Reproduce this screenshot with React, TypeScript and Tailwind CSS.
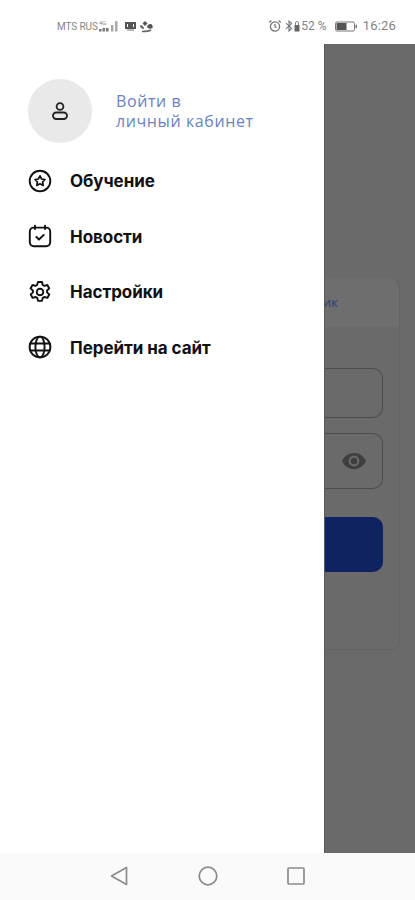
import React from "react";

const Sharp = "[font-family:Inter,'Liberation_Sans',sans-serif]";

function Signal() {
  return (
    <svg width="21" height="14" viewBox="0 0 21 14" className="ml-[1px]">
      <text x="0" y="6" fontSize="6" fill="#8a8a8a" fontFamily="Roboto, sans-serif">4G</text>
      <rect x="0" y="10" width="2.500" height="2.500" fill="#777" />
      <rect x="3.500" y="9" width="2.500" height="3.500" fill="#777" />
      <rect x="7" y="9" width="2.500" height="3.500" fill="#777" />
      <rect x="12" y="6" width="2.500" height="6.500" fill="#aaa" />
      <rect x="16" y="2" width="2.500" height="10.500" fill="#aaa" />
    </svg>
  );
}

function StatusBar() {
  return (
    <div className="h-[44px] shrink-0 bg-white flex items-center justify-between pl-[57px] pr-[19px] pt-[8px] font-['Roboto',sans-serif] text-[#858585]">
      <div className="flex items-center">
        <span className="text-[10px] tracking-[-0.1px]">MTS RUS</span>
        <Signal />
        <svg width="11" height="10" viewBox="0 0 11 10" className="ml-[5px]">
          <path d="M0 1h11v7H0z M2 3v3h7V3z" fill="#555" fillRule="evenodd" />
          <rect x="3" y="3" width="5" height="3" fill="#555" />
          <rect x="2" y="8.500" width="7" height="1" fill="#777" />
        </svg>
        <svg width="15" height="13" viewBox="0 0 15 13" className="ml-[3px]">
          <path d="M6 1 8.500 3.500 6 6 3.500 3.500Z" fill="#555" />
          <path d="M1 5c2 0 4 1.500 4 4-2.500 0-4-1.500-4-4Z" fill="#666" />
          <path d="M8 7c0-2 2-3.500 4-3 1.500 1 2 2 1.500 4-1.500 1-4 1-5.500-1Z" fill="#555" />
          <path d="M3 11.500c3 0 6.500 0 9-1.500" stroke="#666" strokeWidth="1.500" fill="none" />
        </svg>
      </div>
      <div className="flex items-center">
        <svg width="14" height="14" viewBox="0 0 14 14" fill="none" stroke="#777" strokeWidth="1.300">
          <circle cx="7" cy="7.500" r="4.600" />
          <path d="M7 5v2.700l1.600 1M1.200 3.400 3.400 1.400M12.800 3.400l-2.200-2" />
        </svg>
        <svg width="8" height="12" viewBox="0 0 8 12" fill="none" stroke="#777" strokeWidth="1.100" className="ml-[3px]">
          <path d="M1 3.200 6.600 8.400 4 11V1l2.600 2.600L1 8.800" />
        </svg>
        <svg width="6" height="12" viewBox="0 0 6 12" className="ml-[1px]">
          <path d="M1.500 5V3a1.500 1.500 0 0 1 3 0v2" fill="none" stroke="#888" />
          <rect x="0.500" y="5" width="5" height="6.500" fill="#666" />
        </svg>
        <span className="ml-[1px] text-[12px]">52 %</span>
        <svg width="23" height="11" viewBox="0 0 23 11" className="ml-[8px]">
          <rect x="0.500" y="1" width="19" height="9" rx="1.500" fill="#fff" stroke="#777" />
          <rect x="1.500" y="2" width="10" height="7" fill="#555" />
          <rect x="20.500" y="3.800" width="1.500" height="3.400" fill="#777" />
        </svg>
        <span className="ml-[5px] text-[13px] tracking-[0.2px]">16:26</span>
      </div>
    </div>
  );
}

function Icon({ children }: { children: React.ReactNode }) {
  return (
    <svg width="24" height="24" viewBox="0 0 24 24" fill="none" stroke="#111" strokeWidth="1.900" strokeLinecap="round" strokeLinejoin="round" className="shrink-0">
      {children}
    </svg>
  );
}

const items = [
  {
    label: "Обучение",
    icon: (
      <>
        <circle cx="12" cy="12" r="10.300" />
        <path d="M12 6.800 13.600 10 17 10.500 14.600 13 15.200 16.400 12 14.800 8.800 16.400 9.400 13 7 10.500 10.400 10Z" strokeWidth="1.700" />
      </>
    ),
  },
  {
    label: "Новости",
    icon: (
      <>
        <rect x="1.800" y="3.600" width="20.400" height="18.600" rx="4" />
        <path d="M7 1.600v3.400M17 1.600v3.400" />
        <path d="m8.400 13 2.600 2.500 4.800-4.600" />
      </>
    ),
  },
  {
    label: "Настройки",
    icon: (
      <>
        <circle cx="12" cy="12" r="3.300" />
        <path d="M10 2h4l.7 3 1.600.9 3-.9 2 3.400-2.200 2.100v1.900l2.200 2.100-2 3.400-3-.9-1.600.9-.7 3h-4l-.7-3-1.600-.9-3 .9-2-3.400 2.200-2.100v-1.900L2.500 8.400l2-3.400 3 .9 1.600-.9Z" />
      </>
    ),
  },
  {
    label: "Перейти на сайт",
    icon: (
      <>
        <circle cx="12" cy="12" r="10.400" />
        <ellipse cx="12" cy="12" rx="4.600" ry="10.400" />
        <path d="M2.200 8.500h19.600M2.200 15.500h19.600" />
      </>
    ),
  },
];

function Drawer() {
  return (
    <aside className="w-[324px] shrink-0 bg-white pl-[28px] pt-[35px]">
      <div className="flex items-center">
        <div className="w-[64px] h-[64px] rounded-full bg-[#e9e9e9] flex items-center justify-center">
          <svg width="18" height="22" viewBox="0 0 18 22" fill="none" stroke="#222" strokeWidth="1.800">
            <circle cx="9" cy="6.500" r="3.400" />
            <rect x="2" y="12.500" width="14" height="6.500" rx="3.250" />
          </svg>
        </div>
        <div className="ml-[24px] font-['Open_Sans',sans-serif] text-[16px] leading-[20px] tracking-[0.6px] text-[#6a83c0]">
          Войти в
          <br />
          личный кабинет
        </div>
      </div>
      <nav className="mt-[10px] flex flex-col">
        {items.map((it) => (
          <div key={it.label} className="h-[55.500px] flex items-center">
            <Icon>{it.icon}</Icon>
            <span className={`ml-[18px] mt-[2px] text-[17px] font-bold tracking-[-0.05px] text-[#111] ${Sharp}`}>{it.label}</span>
          </div>
        ))}
      </nav>
    </aside>
  );
}

function DimmedPage() {
  return (
    <div className="flex-1 min-w-0 overflow-hidden bg-[#6a6a6a] border-l border-[#5a5a5a] pt-[234px]">
      <div className="w-[75px] h-[372px] rounded-r-[8px] border-r border-b border-[#646464]">
        <div className="h-[49px] bg-[#6e6e6e] rounded-tr-[10px] flex items-center">
          <span className="text-[13px] text-[#2b3f72] font-['Open_Sans',sans-serif] ml-[-2px]">ик</span>
        </div>
        <div className="pt-[41px] w-[58px]">
          <div className="h-[50px] border border-l-0 border-[#4c4c4c] rounded-r-[10px]" />
          <div className="mt-[15px] h-[56px] border border-l-0 border-[#4c4c4c] rounded-r-[10px] flex items-center justify-end pr-[15px]">
            <svg width="26" height="26" viewBox="0 0 24 24" fill="#3f3f3f">
              <path d="M12 4.500C7 4.500 2.700 7.600 1 12c1.700 4.400 6 7.500 11 7.500s9.300-3.100 11-7.500c-1.700-4.400-6-7.500-11-7.500ZM12 17a5 5 0 1 1 0-10 5 5 0 0 1 0 10Zm0-8a3 3 0 1 0 0 6 3 3 0 0 0 0-6Z" />
            </svg>
          </div>
          <div className="mt-[28px] h-[55px] bg-[#0f2262] rounded-r-[10px]" />
        </div>
      </div>
    </div>
  );
}

function NavBar() {
  return (
    <div className="h-[47px] shrink-0 bg-[#fafafa] flex items-center pl-[110px] pb-[1px]">
      <svg width="18" height="20" viewBox="0 0 18 20" fill="none" stroke="#8c8c8c" strokeWidth="1.700" strokeLinejoin="round">
        <path d="M16.500 1.500v17L1.500 10Z" />
      </svg>
      <svg width="20" height="20" viewBox="0 0 20 20" fill="none" stroke="#8c8c8c" strokeWidth="1.700" className="ml-[70px]">
        <circle cx="10" cy="10" r="8.800" />
      </svg>
      <svg width="18" height="18" viewBox="0 0 18 18" fill="none" stroke="#8c8c8c" strokeWidth="1.700" className="ml-[69px]">
        <rect x="1" y="1" width="16" height="16" rx="1" />
      </svg>
    </div>
  );
}

export default function App() {
  return (
    <div className="w-[415px] h-[900px] flex flex-col bg-white overflow-hidden">
      <StatusBar />
      <div className="flex-1 min-h-0 flex">
        <Drawer />
        <DimmedPage />
      </div>
      <NavBar />
    </div>
  );
}
